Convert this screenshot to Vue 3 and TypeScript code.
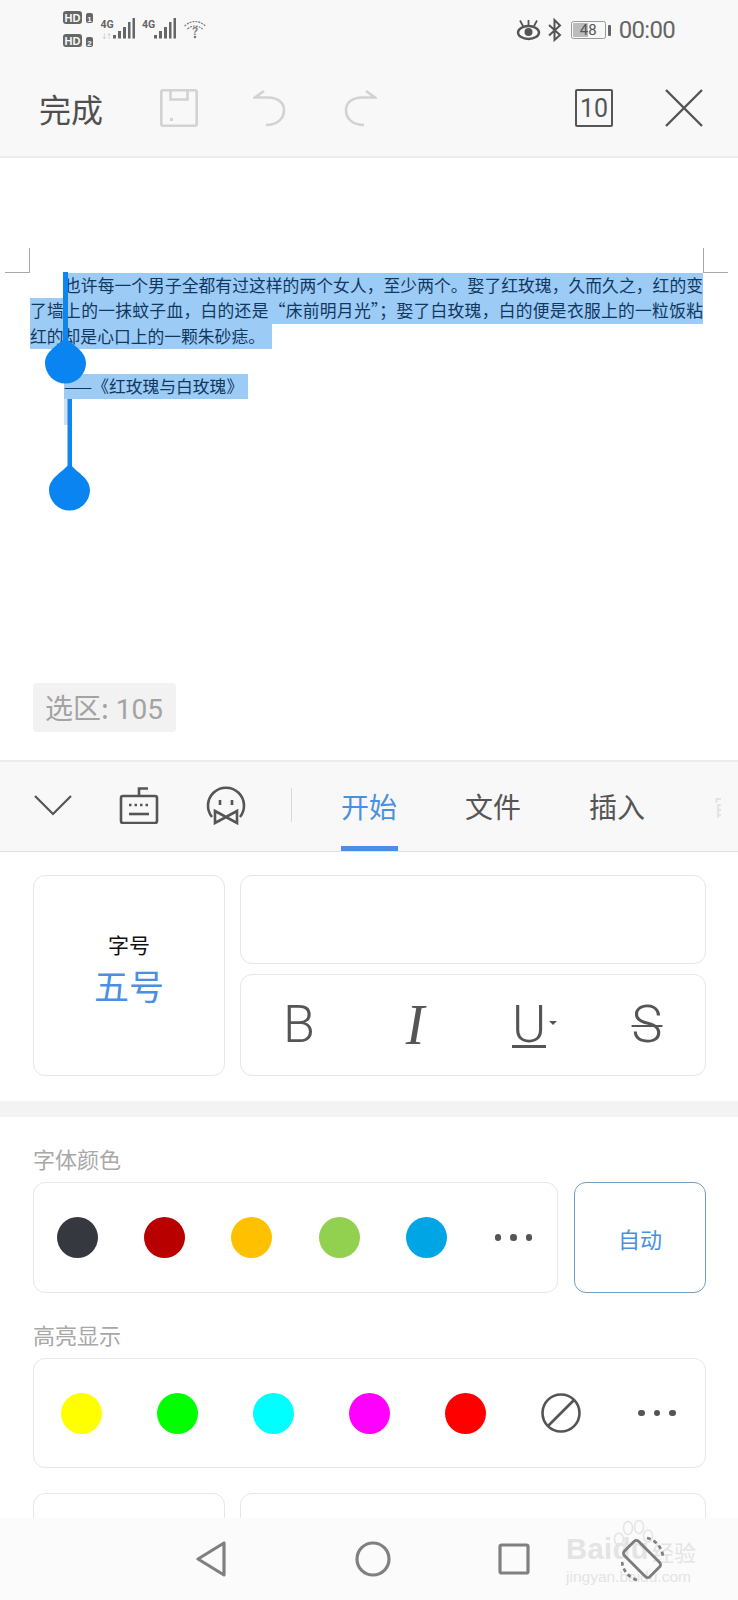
<script setup lang="ts">
const fontColors: string[] = ['#36383f', '#b80000', '#ffc000', '#92d050', '#00a5e5']
const highlightColors: string[] = ['#ffff00', '#00ff00', '#00ffff', '#ff00ff', '#ff0000']
</script>

<template>
  <div class="page">
    <header class="top">
      <div class="status">
        <svg class="st-left" width="150" height="50" viewBox="60 5 150 50">
          <rect x="63" y="11" width="19" height="13" rx="3" fill="#666" />
          <text x="72.5" y="21.5" class="hd">HD</text>
          <rect x="86" y="13" width="7" height="10" rx="2" fill="#666" />
          <text x="89.5" y="21.5" class="hdn">1</text>
          <rect x="63" y="34" width="19" height="13" rx="3" fill="#666" />
          <text x="72.5" y="44.5" class="hd">HD</text>
          <rect x="86" y="37" width="7" height="10" rx="2" fill="#666" />
          <text x="89.5" y="45.5" class="hdn">2</text>
          <text x="100.5" y="28" class="g4">4G</text>
          <text x="101" y="39" class="arrows">↓↑</text>
          <g fill="#666">
            <rect x="113" y="35" width="3" height="3.5" />
            <rect x="118" y="31" width="3" height="7.5" />
            <rect x="123" y="27" width="3" height="11.5" />
            <rect x="128" y="22" width="2.5" height="16.5" />
            <rect x="132.5" y="18" width="2.5" height="20.5" />
          </g>
          <text x="142" y="28" class="g4">4G</text>
          <g fill="#666">
            <rect x="154" y="35" width="3" height="3.5" />
            <rect x="159" y="31" width="3" height="7.5" />
            <rect x="164" y="27" width="3" height="11.5" />
            <rect x="169" y="22" width="2.5" height="16.5" />
            <rect x="173.5" y="18" width="2.5" height="20.5" />
          </g>
          <g fill="none" stroke="#777" stroke-width="1.2">
            <path d="M184.500 26 Q195 17 205.500 26" stroke-dasharray="2 1" />
            <path d="M187.500 29 Q195 23 202.500 29" stroke-dasharray="2 1" />
          </g>
          <text x="195" y="35" class="wq">?</text>
          <circle cx="195" cy="37" r="1.300" fill="#777" />
        </svg>
        <div class="st-right">
          <svg width="46" height="24" viewBox="517 17 46 24">
            <g fill="none" stroke="#555" stroke-width="2.400">
              <ellipse cx="529.500" cy="31.500" rx="10.500" ry="6.500" />
              <path d="M521 19.500 L524 25 M529.500 19 V24 M538 19.500 L535 25" stroke-width="1.800" />
            </g>
            <circle cx="529.500" cy="31" r="4" fill="#555" />
            <path d="M550 24 L561 34 L555.500 39 V19 L561 24.500 L550 34.500" fill="none" stroke="#555" stroke-width="2" />
          </svg>
          <div class="battery">
            <span class="batt-fill"></span>
            <span class="batt-num">48</span>
          </div>
          <span class="batt-tip"></span>
          <span class="clock">00:00</span>
        </div>
      </div>
      <div class="actions">
        <span class="done">完成</span>
        <svg class="ic-save" width="38" height="38" viewBox="0 0 38 38" fill="none" stroke="#d2d2d2" stroke-width="2.600">
          <rect x="1.300" y="1.300" width="35.400" height="35.400" rx="2" />
          <path d="M10.500 1.500 V10.500 H27.500 V1.500" />
          <rect x="10" y="29" width="3" height="3" fill="#d2d2d2" stroke="none" />
        </svg>
        <svg class="ic-undo" width="34" height="38" viewBox="0 0 34 38" fill="none" stroke="#d2d2d2" stroke-width="2.600">
          <path d="M11 2 L2 8.500 L11 8.500 H15 C24 8.500 31 13 31 21 C31 30 24 36 13 36" />
        </svg>
        <svg class="ic-redo" width="34" height="38" viewBox="0 0 34 38" fill="none" stroke="#d2d2d2" stroke-width="2.600">
          <path d="M23 2 L32 8.500 L23 8.500 H19 C10 8.500 3 13 3 21 C3 30 10 36 21 36" />
        </svg>
        <span class="pages">10</span>
        <svg class="ic-close" width="38" height="38" viewBox="0 0 38 38" fill="none" stroke="#555" stroke-width="2.400">
          <path d="M1 1 L37 37 M37 1 L1 37" />
        </svg>
      </div>
    </header>

    <section class="doc">
      <div class="crops">
        <span class="crop crop-l"></span>
        <span class="crop crop-r"></span>
      </div>
      <div class="sel-text">
        <div class="ln ln1">也许每一个男子全都有过这样的两个女人，至少两个。娶了红玫瑰，久而久之，红的变</div>
        <div class="ln ln2">了墙上的一抹蚊子血，白的还是“床前明月光”；娶了白玫瑰，白的便是衣服上的一粒饭粘子，</div>
        <div class="ln ln3">红的却是心口上的一颗朱砂痣。</div>
        <div class="ln-gap"></div>
        <div class="ln ln4">——《红玫瑰与白玫瑰》</div>
        <div class="ln5"></div>
      </div>
      <span class="chip"><span class="chip-cn">选区:</span> 105</span>
      <svg class="handles" width="738" height="602" viewBox="0 158 738 602">
        <rect x="63" y="272" width="5" height="70" fill="#0f86ec" />
        <path d="M65.500 337 C70 344 86 350 86 363 A20.500 20.500 0 0 1 45 363 C45 350 61 344 65.500 337 Z" fill="#0a84f0" />
        <rect x="67.500" y="399" width="4.500" height="70" fill="#0f86ec" />
        <path d="M69.500 463 C74 471 90 477 90 490 A20.500 20.500 0 0 1 49 490 C49 477 65 471 69.500 463 Z" fill="#0a84f0" />
      </svg>
    </section>

    <nav class="tabbar">
      <svg class="t-chev" width="38" height="22" viewBox="0 0 38 22" fill="none" stroke="#555" stroke-width="2.200">
        <path d="M1 2 L19 20 L37 2" />
      </svg>
      <svg class="t-kb" width="40" height="38" viewBox="0 0 40 38" fill="none" stroke="#555" stroke-width="2.600">
        <rect x="2" y="10" width="36" height="27" rx="2" />
        <path d="M20 10 V2.500 H29" />
        <path d="M10 28 H30" />
        <path d="M10 19 H31" stroke-dasharray="2.500 3" />
      </svg>
      <svg class="t-face" width="40" height="40" viewBox="0 0 40 40" fill="none" stroke="#555" stroke-width="2.600">
        <path d="M6 32 A18 18 0 1 1 34 32" />
        <path d="M14 15 V20 M26 15 V20" />
        <path d="M9 26 L20 32 L31 26 V38 L20 32 L9 38 Z" />
      </svg>
      <span class="t-div"></span>
      <span class="tab active">开始</span>
      <span class="tab">文件</span>
      <span class="tab">插入</span>
      <span class="tab-fade"><span>审阅</span></span>
    </nav>

    <main class="panel">
      <div class="row-font">
        <div class="card size-card">
          <span class="size-label">字号</span>
          <span class="size-value">五号</span>
        </div>
        <div class="card font-card"></div>
        <div class="card fmt-card">
          <span class="fmt fmt-b">B</span>
          <span class="fmt fmt-i">I</span>
          <span class="fmt fmt-u"><span class="u-letter">U</span><i class="u-caret"></i></span>
          <span class="fmt fmt-s">S</span>
        </div>
      </div>
      <div class="band"></div>
      <div class="colors">
        <div class="label">字体颜色</div>
        <div class="color-row">
          <div class="card swatches six">
            <span v-for="c in fontColors" :key="c" class="cell"><i class="dot" :style="{ background: c }"></i></span>
            <span class="cell more"><i></i><i></i><i></i></span>
          </div>
          <div class="card auto">自动</div>
        </div>
        <div class="label label2">高亮显示</div>
        <div class="card swatches seven">
          <span v-for="c in highlightColors" :key="c" class="cell"><i class="dot" :style="{ background: c }"></i></span>
          <span class="cell">
            <svg width="40" height="40" viewBox="0 0 40 40" fill="none" stroke="#555" stroke-width="2.600">
              <circle cx="20" cy="20" r="18.500" />
              <path d="M7 33 L33 7" />
            </svg>
          </span>
          <span class="cell more"><i></i><i></i><i></i></span>
        </div>
        <div class="row-last">
          <div class="card last-l">多倍行距</div>
          <div class="card last-r"></div>
        </div>
      </div>
    </main>

    <footer class="navbar">
      <svg class="n-back" width="30" height="36" viewBox="0 0 30 36" fill="none" stroke="#808080" stroke-width="3.200" stroke-linejoin="round">
        <path d="M28 2 V34 L2 18 Z" />
      </svg>
      <svg class="n-home" width="36" height="36" viewBox="0 0 36 36" fill="none" stroke="#808080" stroke-width="3.200">
        <circle cx="18" cy="18" r="16" />
      </svg>
      <svg class="n-recent" width="32" height="32" viewBox="0 0 32 32" fill="none" stroke="#808080" stroke-width="3.200" stroke-linejoin="round">
        <rect x="2" y="2" width="28" height="28" rx="1.500" />
      </svg>
      <div class="wm">
        <svg class="wm-paw" width="44" height="34" viewBox="0 0 44 34" fill="none" stroke="#e4e4e4" stroke-width="1.500">
          <ellipse cx="8" cy="19" rx="4.500" ry="6" />
          <ellipse cx="17" cy="8" rx="4.500" ry="6.500" />
          <ellipse cx="28" cy="7" rx="4.500" ry="6.500" />
          <ellipse cx="37" cy="16" rx="4.500" ry="6" />
          <path d="M12 32 C12 22 32 20 33 32" />
        </svg>
        <span class="wm-bai">Baidu</span>
        <span class="wm-jy">经验</span>
        <span class="wm-url">jingyan.baidu.com</span>
      </div>
      <svg class="n-rotate" width="44" height="46" viewBox="0 0 44 46" fill="none" stroke="#808080" stroke-width="2.800">
        <rect x="11" y="5" width="20" height="36" rx="3" transform="rotate(-45 21 23)" stroke="#7d7d7d" />
        <path d="M26 2 A21 21 0 0 1 42 22" stroke-dasharray="4 3" />
        <path d="M16 44 A21 21 0 0 1 1 26" stroke-dasharray="4 3" />
      </svg>
    </footer>
  </div>
</template>

<style>
html, body { margin: 0; padding: 0; background: #fff; }
</style>

<style scoped>
.page {
  width: 738px;
  height: 1600px;
  position: relative;
  overflow: hidden;
  display: flex;
  flex-direction: column;
  background: #fff;
  font-family: "Noto Sans CJK SC", "Noto Sans", sans-serif;
}
.top {
  height: 158px;
  flex: none;
  box-sizing: border-box;
  background: #f8f8f8;
  border-bottom: 2px solid #ededed;
}
.status {
  height: 60px;
  display: flex;
  align-items: center;
  justify-content: space-between;
  padding-left: 60px;
  padding-right: 63px;
}
.hd { font: 700 11px "Liberation Sans", sans-serif; fill: #f8f8f8; text-anchor: middle; }
.hdn { font: 700 8px "Liberation Sans", sans-serif; fill: #f8f8f8; text-anchor: middle; }
.g4 { font: 700 10.500px "Roboto", sans-serif; fill: #666; }
.arrows { font: 400 8px "DejaVu Sans", sans-serif; fill: #ccc; letter-spacing: -2px; }
.wq { font: 700 10px "Liberation Sans", sans-serif; fill: #777; text-anchor: middle; }
.st-right { display: flex; align-items: center; }
.battery {
  width: 35px;
  height: 18px;
  margin-left: 9px;
  box-sizing: border-box;
  border: 1px solid #999;
  border-radius: 2.500px;
  position: relative;
  display: flex;
  align-items: center;
  justify-content: center;
}
.batt-fill { position: absolute; left: 1px; top: 1px; bottom: 1px; width: 15px; background: #bcbcbc; }
.batt-num { position: relative; font: 400 15px "Roboto", sans-serif; color: #555; }
.batt-tip { width: 3px; height: 11px; background: #666; margin-left: 2px; border-radius: 1px; }
.clock {
  margin-left: 8px;
  font: 400 24px "Roboto", sans-serif;
  letter-spacing: -0.700px;
  color: #666;
}
.actions {
  height: 96px;
  display: flex;
  align-items: center;
  padding-left: 39px;
  padding-right: 35px;
}
.done { font-size: 32px; line-height: 40px; color: #4f4f4f; width: 121px; flex: none; white-space: nowrap; }
.ic-save { flex: none; }
.ic-undo { flex: none; margin-left: 55px; }
.ic-redo { flex: none; margin-left: 56px; }
.pages {
  flex: none;
  margin-left: auto;
  width: 38px;
  height: 38px;
  box-sizing: border-box;
  border: 2.500px solid #555;
  border-radius: 2px;
  display: flex;
  align-items: center;
  justify-content: center;
  font: 400 25px "Roboto", sans-serif;
  color: #555;
}
.ic-close { flex: none; margin-left: 52px; }

.doc {
  height: 602px;
  flex: none;
  position: relative;
  display: flex;
  flex-direction: column;
  background: #fff;
}
.crops {
  display: flex;
  justify-content: space-between;
  margin-top: 90px;
  padding-left: 5px;
  padding-right: 10px;
}
.crop { width: 25px; height: 25px; box-sizing: border-box; border-bottom: 1px solid #a8a8a8; }
.crop-l { border-right: 1px solid #a8a8a8; }
.crop-r { border-left: 1px solid #a8a8a8; }
.sel-text { padding-left: 30px; width: 673px; font-size: 16.800px; color: #12375f; }
.ln {
  height: 25.300px;
  line-height: 25.300px;
  background: #9ccbf6;
  white-space: nowrap;
  overflow: hidden;
}
.ln1, .ln2 { text-align: justify; text-align-last: justify; white-space: normal; }
.ln1 { margin-left: 34px; }
.ln3 { width: 242px; }
.ln4 { margin-left: 34px; width: 184px; margin-top: 0; }
.ln-gap { height: 25px; }
.ln5 { margin-left: 34px; width: 8px; height: 26px; background: #cfe0f0; }
.chip {
  position: absolute;
  left: 33px;
  top: 525px;
  box-sizing: border-box;
  width: 143px;
  height: 49px;
  padding-left: 12px;
  border-radius: 4px;
  background: #f2f2f2;
  color: #a3a3a3;
  font: 400 28px/49px "Roboto", sans-serif;
  white-space: nowrap;
}
.chip-cn { font-family: "Noto Sans CJK SC", sans-serif; }
.handles { position: absolute; left: 0; top: 0; pointer-events: none; }

.tabbar {
  height: 92px;
  flex: none;
  box-sizing: border-box;
  display: flex;
  align-items: center;
  background: #f8f8f8;
  border-top: 2px solid #ececec;
  border-bottom: 1px solid #e2e2e2;
  padding-left: 34px;
  overflow: hidden;
}
.t-chev { flex: none; margin-bottom: 4px; }
.t-kb { flex: none; margin-left: 47px; margin-bottom: 4px; }
.t-face { flex: none; margin-left: 47px; margin-bottom: 4px; }
.t-div { flex: none; width: 1px; height: 34px; background: #d8d8d8; margin-left: 45px; margin-bottom: 4px; }
.tab {
  flex: none;
  height: 100%;
  box-sizing: border-box;
  width: 57px;
  margin-left: 49px;
  font-size: 28px;
  line-height: 88px;
  color: #555;
  white-space: nowrap;
}
.tab + .tab { margin-left: 67px; }
.tab.active { color: #4a90e2; border-bottom: 5px solid #4a90e2; }
.tab-fade {
  flex: none;
  width: 8px;
  overflow: hidden;
  margin-left: 67px;
  opacity: 0.12;
  font-size: 28px;
  line-height: 88px;
  color: #555;
  white-space: nowrap;
}

.panel {
  flex: 1;
  min-height: 0;
  overflow: hidden;
  background: #fff;
}
.card {
  box-sizing: border-box;
  background: #fff;
  border: 1px solid #e6e6e6;
  border-radius: 12px;
}
.row-font {
  display: grid;
  grid-template-columns: 192px 466px;
  grid-template-rows: 89px 102px;
  column-gap: 15px;
  row-gap: 10px;
  padding: 23px 32px 25px 33px;
}
.size-card {
  grid-row: 1 / span 2;
  display: flex;
  flex-direction: column;
  align-items: center;
  justify-content: center;
  padding-bottom: 13px;
}
.size-label { font-size: 21px; line-height: 32px; color: #111; }
.size-value { font-size: 35px; line-height: 50px; color: #4a90e2; }
.fmt-card { display: grid; grid-template-columns: repeat(4, 1fr); align-items: center; justify-items: center; }
.fmt { color: #555; line-height: 1; font-family: "Roboto", sans-serif; font-weight: 300; font-size: 52px; position: relative; }
.fmt-i { font-family: "Liberation Serif", serif; font-style: italic; font-weight: 400; font-size: 56px; }
.fmt-u { display: flex; align-items: center; padding-left: 7px; }
.u-letter { border-bottom: 3px solid #555; line-height: 44px; height: 42px; display: block; }
.u-caret {
  display: block;
  margin-left: 3px;
  margin-bottom: 4px;
  width: 0;
  height: 0;
  border-left: 4px solid transparent;
  border-right: 4px solid transparent;
  border-top: 4px solid #555;
}
.fmt-s { text-decoration: line-through; text-decoration-thickness: 2px; }
.band { height: 16px; background: #f3f3f3; }
.colors { padding: 26px 32px 0 33px; }
.label { font-size: 22px; line-height: 30px; color: #a8a8a8; margin-bottom: 9px; }
.label2 { margin-top: 26px; }
.color-row { display: grid; grid-template-columns: 525px 132px; column-gap: 16px; height: 111px; }
.swatches { display: grid; align-items: center; }
.six { grid-template-columns: repeat(6, 1fr); }
.seven { grid-template-columns: repeat(7, 1fr); height: 110px; }
.cell { display: flex; align-items: center; justify-content: center; gap: 9px; }
.dot { display: block; width: 41px; height: 41px; border-radius: 50%; }
.more i { display: block; width: 6.500px; height: 6.500px; border-radius: 50%; background: #555; }
.auto {
  border-color: #6f9fc4;
  display: flex;
  align-items: center;
  justify-content: center;
  font-size: 22px;
  color: #4a90e2;
}
.row-last {
  display: grid;
  grid-template-columns: 192px 466px;
  column-gap: 15px;
  margin-top: 25px;
  height: 120px;
}
.last-l { text-align: center; font-size: 21px; line-height: 30px; padding-top: 20px; color: #111; }

.navbar {
  height: 82px;
  flex: none;
  position: relative;
  display: flex;
  align-items: center;
  background: #fbfbfb;
  padding-left: 196px;
}
.n-back { flex: none; }
.n-home { flex: none; margin-left: 129px; }
.n-recent { flex: none; margin-left: 107px; }
.wm { position: absolute; left: 566px; top: 0; width: 134px; height: 70px; color: #e4e4e4; }
.wm-paw { position: absolute; left: 45px; top: 2px; }
.wm-bai { position: absolute; left: 0; top: 15px; font: 700 29px/32px "Liberation Sans", sans-serif; letter-spacing: 0.500px; }
.wm-jy { position: absolute; left: 86px; top: 19px; font-size: 22px; line-height: 28px; }
.wm-url { position: absolute; left: 0; top: 50px; font: 400 15.500px/18px "Liberation Sans", sans-serif; white-space: nowrap; }
.n-rotate { position: absolute; left: 621px; top: 18px; }
</style>
